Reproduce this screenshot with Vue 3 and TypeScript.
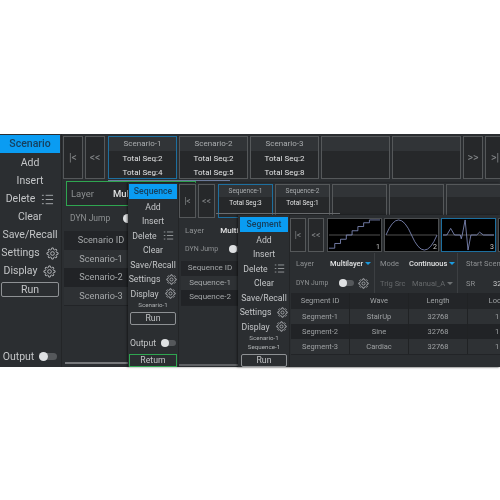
<script setup lang="ts">
interface Card { title?: string; lines?: string[]; sel?: boolean; wave?: string; num?: number }
interface Win {
  id: string; menu: string; crumbs: string[]; output: boolean; ret: boolean;
  cards: Card[]; end: boolean; rowsHead: string[]; rows: string[][];
}
const stair = 'M1 31H7V26H13V21.5H19V17H25V12.5H31V8H37V4H43V1H54'
const sine = 'M1 17Q14 -15 27.5 17T54 17'
const cardiac = 'M1 17H5L9 10L13 17H19L20 21L21 17L24 1L27 33L30 17H36L39 14L43 17H54'
const windows: Win[] = [
  {
    id: 'w1', menu: 'Scenario', crumbs: [], output: true, ret: false, end: true,
    cards: [
      { title: 'Scenario-1', lines: ['Total Seq:2', 'Total Seg:4'], sel: true },
      { title: 'Scenario-2', lines: ['Total Seq:2', 'Total Seg:5'] },
      { title: 'Scenario-3', lines: ['Total Seq:2', 'Total Seg:8'] },
      {}, {},
    ],
    rowsHead: ['Scenario ID'], rows: [['Scenario-1'], ['Scenario-2'], ['Scenario-3']],
  },
  {
    id: 'w2', menu: 'Sequence', crumbs: ['Scenario-1'], output: true, ret: true, end: false,
    cards: [
      { title: 'Sequence-1', lines: ['Total Seg:3'], sel: true },
      { title: 'Sequence-2', lines: ['Total Seg:1'] },
      {}, {}, {},
    ],
    rowsHead: ['Sequence ID'], rows: [['Sequence-1'], ['Sequence-2']],
  },
  {
    id: 'w3', menu: 'Segment', crumbs: ['Scenario-1', 'Sequence-1'], output: false, ret: false, end: false,
    cards: [
      { wave: stair, num: 1 }, { wave: sine, num: 2 }, { wave: cardiac, num: 3, sel: true }, { wave: '' },
    ],
    rowsHead: ['Segment ID', 'Wave', 'Length', 'Loop'],
    rows: [
      ['Segment-1', 'StairUp', '32768', '1'],
      ['Segment-2', 'Sine', '32768', '1'],
      ['Segment-3', 'Cardiac', '32768', '1'],
    ],
  },
]
const gear = 'M6.2 1H7.8L8.1 2.6L9.3 3.1L10.7 2.2L11.8 3.3L10.9 4.7L11.4 5.9L13 6.2V7.8L11.4 8.1L10.9 9.3L11.8 10.7L10.7 11.8L9.3 10.9L8.1 11.4L7.8 13H6.2L5.9 11.4L4.7 10.9L3.3 11.8L2.2 10.7L3.1 9.3L2.6 8.1L1 7.8V6.2L2.6 5.9L3.1 4.7L2.2 3.3L3.3 2.2L4.7 3.1L5.9 2.6Z'
</script>

<template>
  <div class="stage">
    <section v-for="w in windows" :key="w.id" class="win" :class="w.id">
      <aside class="side">
        <div class="item active">{{ w.menu }}</div>
        <div class="item">Add</div>
        <div class="item">Insert</div>
        <div class="item icon-item">
          <span>Delete</span>
          <svg class="ico" viewBox="0 0 14 14" fill="none" stroke="#a9adb0" stroke-width="1">
            <path d="M5 2.5H13M5 7H13M5 11.5H13M1 2.5H3M1 7H3M1 11.5H3" />
          </svg>
        </div>
        <div class="item">Clear</div>
        <div class="item">Save/Recall</div>
        <div class="item icon-item">
          <span>Settings</span>
          <svg class="ico" viewBox="0 0 14 14" fill="none" stroke="#b5b8bb" stroke-width="1">
            <path :d="gear" /><circle cx="7" cy="7" r="2" />
          </svg>
        </div>
        <div class="item icon-item">
          <span>Display</span>
          <svg class="ico" viewBox="0 0 14 14" fill="none" stroke="#b5b8bb" stroke-width="1">
            <path :d="gear" /><circle cx="7" cy="7" r="2" />
          </svg>
        </div>
        <div v-for="c in w.crumbs" :key="c" class="crumb">{{ c }}</div>
        <div class="run">Run</div>
        <div v-if="w.output" class="output">
          <span>Output</span>
          <span class="toggle"><i></i></span>
        </div>
        <div v-if="w.ret" class="return">Return</div>
      </aside>

      <main class="main">
        <div class="nav">
          <div class="nbtn">|&lt;</div>
          <div class="nbtn">&lt;&lt;</div>
          <div
            v-for="(c, i) in w.cards"
            :key="i"
            class="card"
            :class="{ sel: c.sel, wavecard: c.wave !== undefined }"
          >
            <template v-if="c.wave !== undefined">
              <svg class="wave" viewBox="0 0 55 34" preserveAspectRatio="none" fill="none">
                <path d="M1 17H54" stroke="#8d8d8d" stroke-width="0.6" />
                <path :d="c.wave" stroke="#8f9bd0" stroke-width="0.8" />
              </svg>
              <span class="num">{{ c.num }}</span>
            </template>
            <template v-else>
              <div class="chead">{{ c.title }}</div>
              <div v-for="l in c.lines" :key="l" class="cline">{{ l }}</div>
            </template>
          </div>
          <template v-if="w.end">
            <div class="nbtn">&gt;&gt;</div>
            <div class="nbtn">&gt;|</div>
          </template>
        </div>
        <div class="scrollbar"></div>

        <div class="form">
          <div class="frow">
            <div class="field layer">
              <span class="lbl">Layer</span>
              <span class="val">Multilayer</span>
              <i class="caret"></i>
            </div>
            <template v-if="w.id === 'w3'">
              <div class="field mode">
                <span class="lbl">Mode</span>
                <span class="val">Continuous</span>
                <i class="caret"></i>
              </div>
              <div class="field start"><span class="lbl">Start Scenario</span></div>
            </template>
          </div>
          <div class="frow">
            <div class="field layer dyn">
              <span class="lbl">DYN Jump</span>
              <span class="toggle"><i></i></span>
              <svg v-if="w.id === 'w3'" class="ico gearf" viewBox="0 0 14 14" fill="none" stroke="#b5b8bb" stroke-width="1">
                <path :d="gear" /><circle cx="7" cy="7" r="2" />
              </svg>
            </div>
            <template v-if="w.id === 'w3'">
              <div class="field mode dim">
                <span class="lbl">Trig Src</span>
                <span class="lbl mval">Manual_A</span>
                <i class="caret grey"></i>
              </div>
              <div class="field start">
                <span class="lbl">SR</span>
                <span class="srv">32.0</span>
              </div>
            </template>
          </div>
        </div>

        <div class="table">
          <div class="tr head">
            <div v-for="h in w.rowsHead" :key="h" class="td">{{ h }}</div>
          </div>
          <div v-for="(r, i) in w.rows" :key="i" class="tr" :class="{ dark: i % 2 === 1 }">
            <div v-for="(c, j) in r" :key="j" class="td">{{ c }}</div>
          </div>
        </div>
        <div class="hbar"></div>
      </main>
    </section>
  </div>
</template>

<style>
html, body { margin: 0; background: #fff; }
</style>

<style scoped>
.stage {
  position: relative;
  width: 500px;
  height: 500px;
  overflow: hidden;
  background: #fff;
  font-family: Roboto, "Noto Sans", sans-serif;
  color: #c3c5c7;
  filter: blur(0.45px);
}
.win {
  position: absolute;
  display: flex;
  overflow: hidden;
  background: #2b2e31;
  --fs: 10.5px;
  --item: 18px;
  --btn: 20px;
  --cardw: 69px;
  --navh: 43px;
}
.w1 { left: 0; top: 134px; width: 500px; height: 233px; }
.w2 {
  left: 128px; top: 183px; width: 372px; height: 184px;
  --fs: 8.7px; --item: 14.5px; --btn: 17px; --cardw: 55px; --navh: 34px;
  box-shadow: -1px 0 2px rgba(0,0,0,.5);
}
.w3 {
  left: 238px; top: 215px; width: 262px; height: 152px;
  --fs: 8.7px; --item: 14.5px; --btn: 16px; --cardw: 55px; --navh: 34px;
  box-shadow: -1px 0 2px rgba(0,0,0,.5);
}

.side {
  flex: none;
  box-sizing: border-box;
  width: 62px;
  display: flex;
  flex-direction: column;
  padding: 1px 1px 3px 0;
  border-right: 1px solid #232527;
  font-size: var(--fs);
}
.w2 .side { width: 51px; padding: 1px 1px 0 1px; }
.w3 .side { width: 52px; padding: 2px 1px 2px 2px; }
.item {
  height: var(--item);
  line-height: var(--item);
  text-align: center;
  white-space: nowrap;
}
.item.active {
  background: #0a9cf2;
  color: #16405e;
  font-weight: 500;
  margin-bottom: 1px;
}
.icon-item {
  display: flex;
  align-items: center;
  justify-content: center;
  gap: 6px;
}
.ico { width: 13px; height: 13px; flex: none; }
.w2 .ico, .w3 .ico { width: 11px; height: 11px; }
.crumb {
  font-size: 6.2px;
  line-height: 9px;
  text-align: center;
  color: #aeb1b3;
}
.run {
  box-sizing: border-box;
  height: 15px;
  line-height: 13px;
  margin: 2px 1px 0;
  border: 1px solid #8e9194;
  border-radius: 2px;
  text-align: center;
}
.w2 .run, .w3 .run { height: 13px; line-height: 11px; }
.output {
  margin-top: auto;
  display: flex;
  align-items: center;
  justify-content: center;
  gap: 5px;
  padding-bottom: 1px;
}
.w2 .output { padding-bottom: 6px; }
.toggle {
  display: inline-block;
  flex: none;
  position: relative;
  width: 18px;
  height: 7px;
  border-radius: 4px;
  background: #55585b;
}
.w2 .toggle, .w3 .toggle { width: 15px; height: 6px; }
.toggle i {
  position: absolute;
  left: 0;
  top: -1px;
  width: 9px;
  height: 9px;
  border-radius: 50%;
  background: #dfe1e3;
}
.w2 .toggle i, .w3 .toggle i { width: 8px; height: 8px; }
.return {
  box-sizing: border-box;
  height: 13px;
  line-height: 11px;
  border: 1px solid #2fa550;
  text-align: center;
}

.main { flex: 1; min-width: 0; position: relative; }
.nav {
  display: flex;
  gap: 2px;
  height: var(--navh);
  padding-top: 2px;
  padding-left: 1px;
}
.w2 .nav { padding-top: 1px; padding-left: 0; }
.w3 .nav { padding-top: 3px; padding-left: 0; }
.nbtn {
  flex: none;
  box-sizing: border-box;
  width: var(--btn);
  border: 1px solid #55585a;
  background: #26282a;
  color: #85888a;
  display: flex;
  align-items: center;
  justify-content: center;
  font-size: var(--fs);
}
.nbtn + .card { margin-left: 1px; }
.card {
  flex: none;
  box-sizing: border-box;
  width: var(--cardw);
  border: 1px solid #55585a;
  background: #26282a;
  position: relative;
}
.card.sel { border-color: #1d6f9f; }
.chead {
  height: 14px;
  line-height: 14px;
  background: #313437;
  text-align: center;
  font-size: 8px;
  color: #a9acae;
}
.card:not(.wavecard):empty { background: linear-gradient(#313437 14px, #26282a 14px); }
.cline {
  height: 14px;
  line-height: 14px;
  text-align: center;
  font-size: 8px;
  color: #e2e3e4;
  position: relative;
  top: 1px;
}
.w2 .chead { font-size: 6.5px; height: 12px; line-height: 12px; }
.w2 .cline { font-size: 6.5px; height: 12px; line-height: 12px; top: 0; }
.wavecard { background: #000; border-color: #4b4e50; }
.wavecard.sel { border-color: #1d6f9f; }
.wave { display: block; width: 100%; height: 100%; }
.num {
  position: absolute;
  right: 1px;
  bottom: 0;
  font-size: 7px;
  line-height: 8px;
  color: #c9c9c9;
}
.scrollbar {
  position: absolute;
  left: 46px;
  top: 46px;
  width: 122px;
  height: 1px;
  background: #6d7c9c;
}
.w2 .scrollbar { left: 37px; top: 30px; width: 124px; background: #6a6d70; }
.w3 .scrollbar { display: none; }
.hbar {
  position: absolute;
  left: 3px;
  bottom: 3px;
  width: 140px;
  height: 2px;
  background: #77797c;
}
.w2 .hbar { left: 0; bottom: 1px; width: 60px; background: #5f6164; }
.w3 .hbar { display: none; }

.form { display: flex; flex-direction: column; }
.frow { display: flex; }
.field {
  display: flex;
  align-items: center;
  flex: none;
  white-space: nowrap;
  font-size: 9.5px;
}
.lbl { color: #8d9092; }
.val { color: #e0e1e2; font-weight: 500; }
.caret {
  width: 0; height: 0;
  border-left: 3px solid transparent;
  border-right: 3px solid transparent;
  border-top: 3px solid #1b9be0;
  margin-left: 2px;
}
.caret.grey { border-top-color: #6d7072; }

.w1 .form { margin: 2px 0 0 4px; }
.w1 .frow:first-child .field {
  box-sizing: border-box;
  width: 130px;
  height: 25px;
  border: 1px solid #2fa550;
  padding-left: 4px;
  gap: 19px;
  background: #27292c;
}
.w1 .dyn { height: 22px; padding-left: 4px; margin-top: 1px; }
.w1 .dyn .lbl { width: 53px; font-size: 8.5px; }
.w1 .table { margin: 2px 0 0 2px; width: 74px; }
.w1 .td { font-size: 9.2px; }

.w2 .form { margin: 5px 0 0 6px; }
.w2 .field { font-size: 8px; }
.w2 .frow:first-child .field { height: 14px; gap: 16px; }
.w2 .dyn { height: 22px; margin-top: 1px; }
.w2 .dyn .lbl { width: 44px; font-size: 7px; }
.w2 .table { margin: 1px 0 0 2px; width: 58px; }
.w2 .td { font-size: 8px; }

.w3 .form { margin: 1px 0 0 6px; }
.w3 .field { font-size: 7.5px; }
.w3 .frow { height: 20px; }
.w3 .layer { width: 78px; border-right: 1px solid #3c3f42; }
.w3 .frow .layer > .lbl { width: 34px; }
.w3 .frow .dyn > .lbl { width: 43px; font-size: 6.8px; }
.w3 .mode { width: 83px; padding-left: 5px; box-sizing: border-box; border-right: 1px solid #3c3f42; }
.w3 .mode > .lbl:first-child { width: 29px; }
.w3 .dim .lbl { color: #66696b; }
.w3 .mval { margin-left: 3px; }
.w3 .start { padding-left: 8px; }
.w3 .start .srv { margin-left: 18px; color: #c8c9ca; }
.w3 .gearf { margin-left: 4px; }
.w3 .table { margin: 0 0 0 1px; width: 240px; }
.w3 .table .tr { display: grid; grid-template-columns: 59px 59px 59px 59px; }
.w3 .td { font-size: 7.5px; border-right: 1px solid #202224; color: #9ea1a3; }
.w3 .tr { height: 15px; line-height: 15px; }
.w3 .head { height: 16px; line-height: 16px; }

.table { border-bottom: 1px solid #222427; }
.tr {
  height: 18.5px;
  line-height: 18.5px;
  text-align: center;
  color: #a5a8aa;
  white-space: nowrap;
  background: #2e3134;
}
.w2 .tr { height: 14.5px; line-height: 14.5px; }
.tr.head { background: #232528; }
.tr.dark { background: #212326; }
.td { overflow: hidden; }
</style>
